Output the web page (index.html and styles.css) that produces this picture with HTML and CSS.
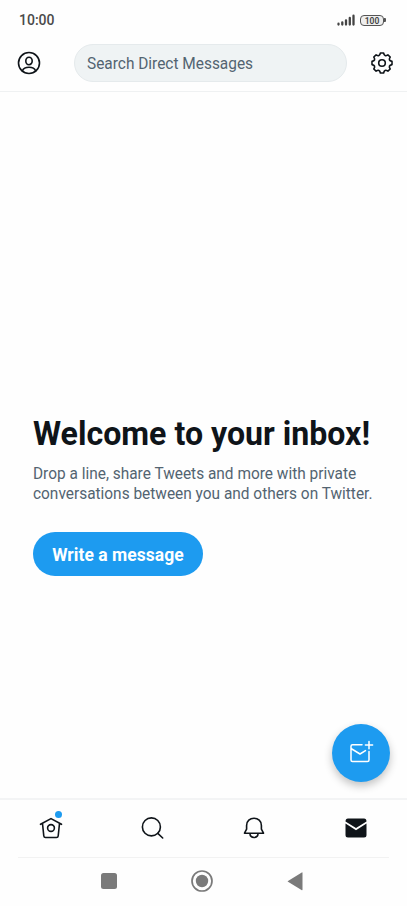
FILE: index.html
```html
<!DOCTYPE html>
<html lang="en">
<head>
<meta charset="utf-8">
<title>Messages</title>
<link rel="stylesheet" href="styles.css">
</head>
<body>
<div class="screen">
  <div class="status">
    <span class="time">10:00</span>
    <span class="indicators">
      <svg class="signal" width="19" height="12" viewBox="0 0 19 12"><path d="M1.5 9.7v.8M5.3 8.3V10.5M9 6.3V10.5M12.8 4V10.5M16.5 1.7V10.5"/></svg>
      <span class="battery">100</span><span class="tip"></span>
    </span>
  </div>
  <header class="header">
    <svg class="icon" width="24" height="24" viewBox="-12 -12 24 24"><circle r="10.5"/><ellipse cy="-2" rx="3.2" ry="3.7"/><path d="M-6.7 8C-5.5 5-3 4.3 0 4.3S5.5 5 6.7 8"/></svg>
    <div class="search"><span class="placeholder">Search Direct Messages</span></div>
    <svg class="icon" width="24" height="24" viewBox="-12 -12 24 24"><path d="M-1.6-10H1.6Q2.4-5.8 5.9-8.2L8.2-5.9Q5.8-2.4 10-1.6V1.6Q5.8 2.4 8.2 5.9L5.9 8.2Q2.4 5.8 1.6 10H-1.6Q-2.4 5.8-5.9 8.2L-8.2 5.9Q-5.8 2.4-10 1.6V-1.6Q-5.8-2.4-8.2-5.9L-5.9-8.2Q-2.4-5.8-1.6-10Z"/><circle r="3.3"/></svg>
  </header>
  <main class="main">
    <h1>Welcome to your inbox!</h1>
    <p>Drop a line, share Tweets and more with private<br>conversations between you and others on Twitter.</p>
    <button class="write">Write a message</button>
    <button class="fab" aria-label="New message">
      <svg width="26" height="26" viewBox="0 0 26 26"><path d="M14 4.7H4.5Q3 4.7 3 6.2V20Q3 21.5 4.5 21.5H19.5Q21 21.5 21 20V11.5M3 8.5L12 14L17.5 10.6M21 1.5V8.7M17.4 5.1H24.6"/></svg>
    </button>
  </main>
  <nav class="tabs">
    <span class="tab"><svg class="icon" width="28" height="28" viewBox="-14 -14 28 28"><path d="M-10.5-3.7L0-9.4L10.5-3.7M-8.5-4.5L-7.2 8Q-7 9.5-5.5 9.5H5.5Q7 9.5 7.2 8L8.5-4.5"/><circle r="3.4"/></svg><span class="dot"></span></span>
    <span class="tab"><svg class="icon" width="28" height="28" viewBox="-14 -14 28 28"><circle cx="-1.6" cy="-1.1" r="9"/><path d="M4.8 5.3L9.7 10"/></svg></span>
    <span class="tab"><svg class="icon" width="28" height="28" viewBox="-14 -14 28 28"><path d="M-9.5 5.2L-7.4 1.2V-2.5C-7.4-7-4-9.7 0-9.7S7.4-7 7.4-2.5V1.2L9.5 5.2ZM-4.1 5.4C-3.8 10.8 3.8 10.8 4.1 5.4"/></svg></span>
    <span class="tab"><svg class="mail" width="28" height="28" viewBox="-14 -14 28 28"><path d="M-10.5-6.5Q-10.5-9.5-8-9.5H8Q10.5-9.5 10.5-6.5L0 .1ZM-10.5-4.5L0 2.2L10.5-4.5V7Q10.5 9.5 8 9.5H-8Q-10.5 9.5-10.5 7Z"/></svg></span>
  </nav>
  <div class="system">
    <svg width="24" height="24" viewBox="-12 -12 24 24"><rect x="-8" y="-8" width="16" height="16" rx="2.5"/></svg>
    <svg width="24" height="24" viewBox="-12 -12 24 24"><circle class="ring" r="10"/><circle r="6.2"/></svg>
    <svg width="24" height="24" viewBox="-12 -12 24 24"><path d="M-7 0L6.8-8.5Q7.5-9 7.5-8V8.5Q7.5 9.5 6.5 8.9L-7 .8Q-7.8 .4-7 0Z"/></svg>
  </div>
</div>
</body>
</html>
```

FILE: styles.css
```css
* { box-sizing: border-box; }
body { margin: 0; background: #fefefe; font-family: Roboto, sans-serif; color: #0f1419; }
.screen { width: 407px; height: 906px; display: flex; flex-direction: column; overflow: hidden; }
.status { height: 36px; padding: 4px 21px 0 19px; display: flex; align-items: center; justify-content: space-between; }
.time { font-size: 14px; font-weight: 500; line-height: 16px; color: #4a4a4a; }
.indicators { display: flex; align-items: center; }
.signal { margin-right: 4px; fill: none; stroke: #444; stroke-width: 2.3; stroke-linecap: round; }
.battery { display: block; width: 24px; height: 11px; border: 1px solid #555; border-radius: 4px; background: #eee; font-size: 8.5px; line-height: 10px; font-weight: 600; text-align: center; color: #444; }
.tip { width: 2px; height: 4px; background: #555; border-radius: 0 1px 1px 0; }
.header { height: 56px; padding: 0 13px 2px 17px; border-bottom: 1px solid #eff1f2; display: flex; align-items: center; justify-content: space-between; }
.icon { display: block; fill: none; stroke: #0f1419; stroke-width: 1.6; stroke-linejoin: round; stroke-linecap: round; }
.search { width: 273px; height: 38px; margin-left: 9px; padding-left: 12px; border: 1px solid #e5eaec; border-radius: 19px; background: #eff3f4; color: #536471; font-size: 16px; line-height: 37px; }
.placeholder, h1, p { transform: scaleX(.964); transform-origin: left top; }
.placeholder { display: inline-block; }
.main { height: 706px; padding: 322px 33px 0; position: relative; }
h1 { margin: 0; font-size: 33px; line-height: 40px; font-weight: 700; white-space: nowrap; transform: scaleX(.973); }
p { margin: 10px 0 0; font-size: 16px; line-height: 20px; color: #536471; white-space: nowrap; }
button { border: 0; padding: 0; font-family: inherit; color: #fff; background: #1d9bf0; }
.write { display: block; width: 170px; height: 44px; padding-top: 2px; margin-top: 28px; border-radius: 22px; font-size: 17.5px; letter-spacing: .04px; font-weight: 700; }
.fab { position: absolute; right: 17px; bottom: 16px; width: 58px; height: 58px; border-radius: 50%; display: flex; align-items: center; justify-content: center; box-shadow: 0 4px 8px rgba(0, 0, 0, .24); }
.fab svg { fill: none; stroke: #fff; stroke-width: 1.5; stroke-linecap: round; stroke-linejoin: round; }
.tabs { height: 59px; padding-bottom: 2px; border-top: 2px solid #f3f4f5; display: grid; grid-template-columns: repeat(4, 1fr); }
.tab { position: relative; display: flex; align-items: center; justify-content: center; }
.mail { fill: #0f1419; }
.dot { position: absolute; left: 55px; top: 11px; width: 7px; height: 7px; border-radius: 50%; background: #1d9bf0; }
.system { height: 49px; margin: 0 18px; padding: 0 82px 2px 79px; border-top: 1px solid #f2f2f2; display: flex; align-items: center; justify-content: space-between; fill: #7a7a7a; }
.ring { fill: none; stroke: #7a7a7a; stroke-width: 1.7; }
```
